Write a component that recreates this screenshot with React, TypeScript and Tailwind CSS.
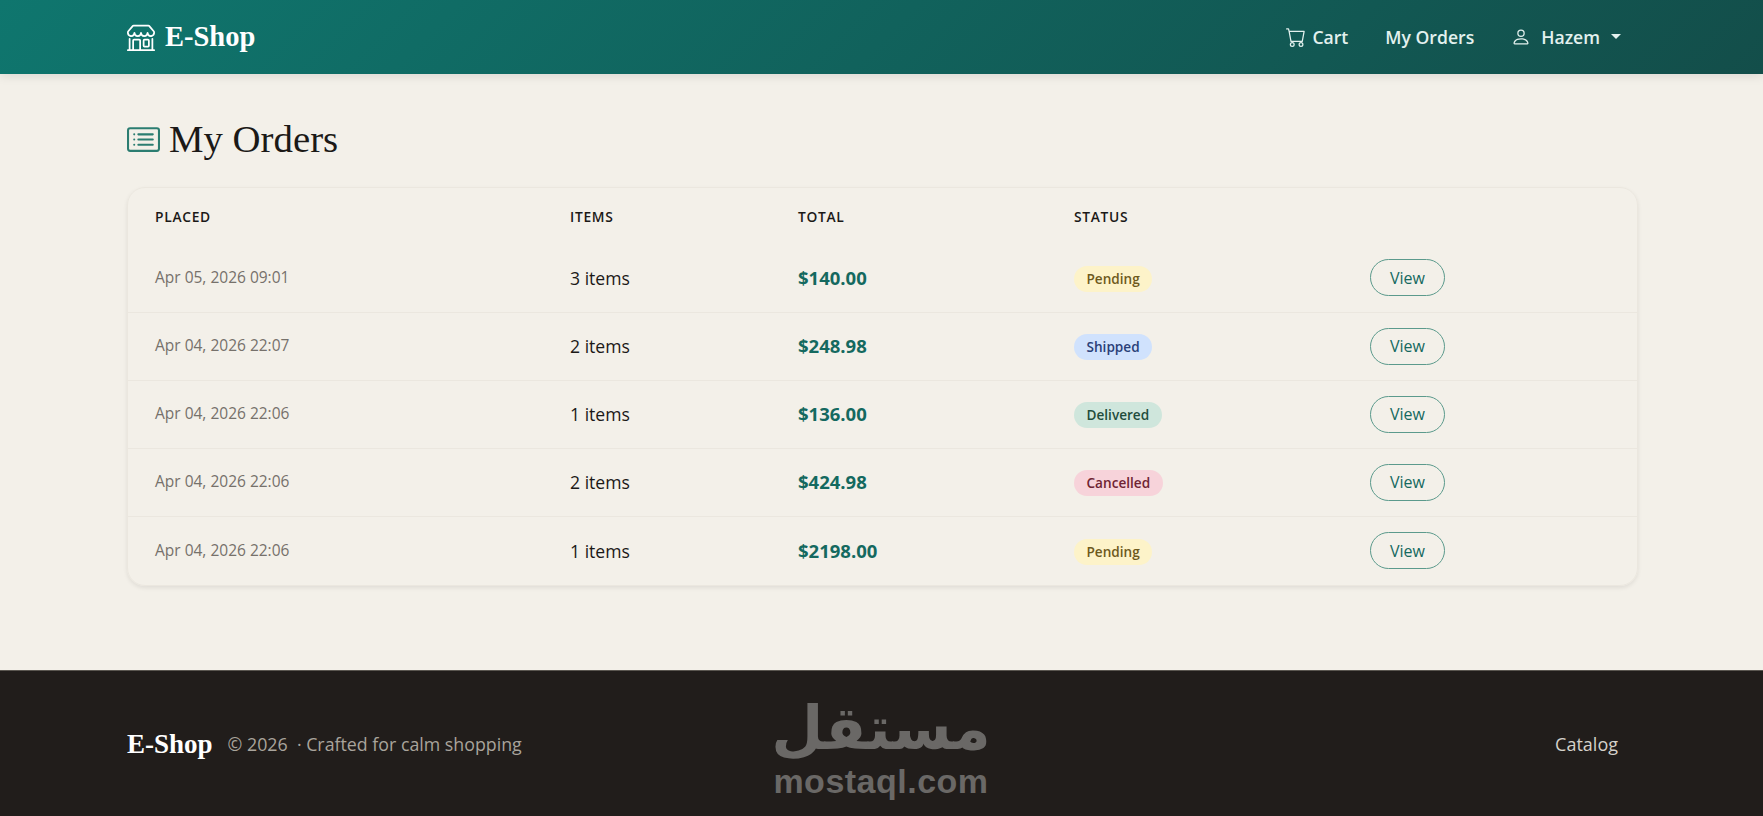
import React from 'react';
import { BsCardList, BsCart, BsPerson, BsShop } from 'react-icons/bs';
import clsx from 'clsx';

type Status = 'Pending' | 'Shipped' | 'Delivered' | 'Cancelled';

interface Order {
    placed: string;
    items: string;
    total: string;
    status: Status;
}

const orders: Order[] = [
    { placed: 'Apr 05, 2026 09:01', items: '3 items', total: '$140.00', status: 'Pending' },
    { placed: 'Apr 04, 2026 22:07', items: '2 items', total: '$248.98', status: 'Shipped' },
    { placed: 'Apr 04, 2026 22:06', items: '1 items', total: '$136.00', status: 'Delivered' },
    { placed: 'Apr 04, 2026 22:06', items: '2 items', total: '$424.98', status: 'Cancelled' },
    { placed: 'Apr 04, 2026 22:06', items: '1 items', total: '$2198.00', status: 'Pending' },
];

const statusClasses: Record<Status, string> = {
    Pending: 'bg-[#fdf3c9] text-[#6e5a1c]',
    Shipped: 'bg-[#d0e2fd] text-[#2a3f78]',
    Delivered: 'bg-[#cfe6dc] text-[#1f4d3c]',
    Cancelled: 'bg-[#f7d3da] text-[#6f2433]',
};

const Navbar = () => (
    <nav className="h-[74px] px-[127px] flex items-center justify-between bg-[linear-gradient(135deg,#0f766e,#134e4a)] shadow-[0_2px_10px_rgba(0,0,0,0.1)]">
        <div className="flex items-center gap-[10px] text-white">
            <BsShop size={28} />
            <span className="font-['Liberation_Serif',serif] text-[28.5px] font-bold leading-none">E-Shop</span>
        </div>
        <div className="flex items-center text-[17.6px] font-semibold text-[#e3f1ee] pr-[15px]">
            <span className="flex items-center gap-[6px]">
                <BsCart size={20} />
                Cart
            </span>
            <span className="ml-[37px]">My Orders</span>
            <span className="ml-[37px] flex items-center">
                <BsPerson size={20} />
                <span className="ml-[10px]">Hazem</span>
                <span className="ml-[11px] w-0 h-0 border-x-[5px] border-x-transparent border-t-[5px] border-t-[#e3f1ee]" />
            </span>
        </div>
    </nav>
);

const OrdersTable = () => (
    <div className="rounded-[18px] border border-[#ebe7df] shadow-[0_2px_4px_rgba(0,0,0,0.08)] overflow-hidden">
        <table className="w-full table-fixed border-collapse">
            <colgroup>
                <col className="w-[415px]" />
                <col className="w-[228px]" />
                <col className="w-[276px]" />
                <col className="w-[296px]" />
                <col />
            </colgroup>
            <thead>
                <tr className="h-[56px] text-left text-[13.8px] font-semibold tracking-[0.7px] text-[#1b1917]">
                    <th className="pl-[27px] pt-[3px] font-semibold">PLACED</th>
                    <th className="pl-[27px] pt-[3px] font-semibold">ITEMS</th>
                    <th className="pl-[27px] pt-[3px] font-semibold">TOTAL</th>
                    <th className="pl-[27px] pt-[3px] font-semibold">STATUS</th>
                    <th />
                </tr>
            </thead>
            <tbody>
                {orders.map((order, i) => (
                    <tr
                        key={i}
                        className={clsx(i < orders.length - 1 ? 'h-[68px] border-b border-[#ebe7df]' : 'h-[69px]')}
                    >
                        <td className="pl-[27px] text-[15.5px] text-[#76716b]">{order.placed}</td>
                        <td className="pl-[27px] text-[17.6px] text-[#1b1917]">{order.items}</td>
                        <td className="pl-[27px] text-[18.5px] font-bold text-[#14695f]">{order.total}</td>
                        <td className="pl-[27px] pt-[2px]">
                            <span className={clsx('inline-block rounded-full px-[12.5px] py-[3px] text-[13.6px] font-semibold', statusClasses[order.status])}>
                                {order.status}
                            </span>
                        </td>
                        <td className="pl-[27px]">
                            <button className="w-[75px] h-[37px] rounded-full border border-[#5b9a8c] text-[16px] font-medium text-[#14695f]">
                                View
                            </button>
                        </td>
                    </tr>
                ))}
            </tbody>
        </table>
    </div>
);

const Footer = () => (
    <footer className="relative h-[146px] px-[127px] flex items-center justify-between bg-[#211d1b] border-t border-[#5a5650]">
        <div className="flex items-center gap-[15px] pt-[2px]">
            <span className="font-['Liberation_Serif',serif] text-[27px] font-bold text-white">E-Shop</span>
            <span className="text-[17.8px] text-[#a9a49c]">© 2026 &nbsp;· Crafted for calm shopping</span>
        </div>
        <span className="text-[18px] text-[#d5d1ca] pr-[18px] pt-[1px]">Catalog</span>
        {/* site watermark over the footer */}
        <div className="absolute left-[774px] top-[22px] w-[214px] flex flex-col items-center text-[#6a6866] font-['DejaVu_Sans',sans-serif] font-bold">
            <span className="text-[60px] leading-[70px]">مستقل</span>
            <span className="font-['Liberation_Sans',sans-serif] text-[34px] leading-[36px] tracking-[0.5px]">mostaql.com</span>
        </div>
    </footer>
);

export default function App() {
    return (
        <div className="min-h-screen bg-[#f3f0e9] font-['Open_Sans',sans-serif]">
            <Navbar />
            <main className="h-[596px] pl-[127px] pr-[125px] pt-[40px]">
                <h1 className="flex items-center gap-[9px] mb-[23px] h-[50px] font-['Liberation_Serif',serif] text-[38.8px] text-[#1b1917]">
                    <BsCardList size={33} className="text-[#2b7d71]" />
                    My Orders
                </h1>
                <OrdersTable />
            </main>
            <Footer />
        </div>
    );
}
